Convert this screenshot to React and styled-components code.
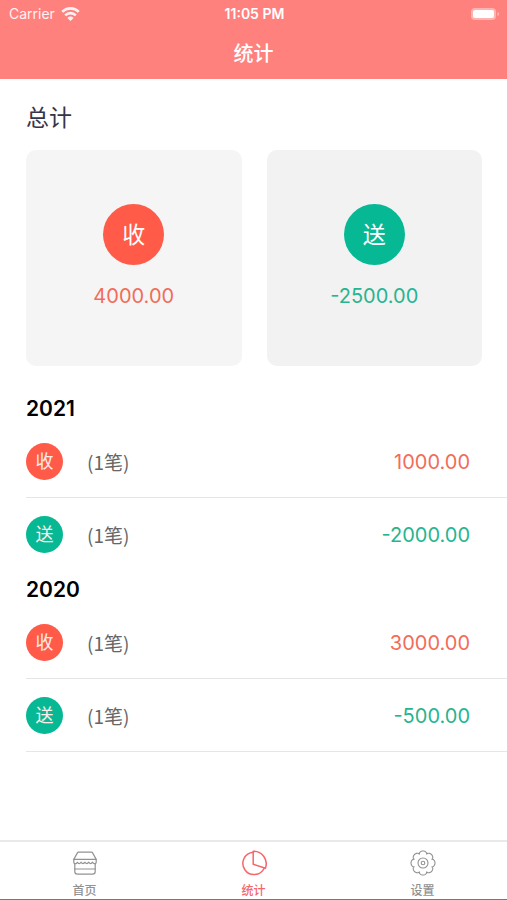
import React, { useState } from 'react';
import styled, { createGlobalStyle } from 'styled-components';

const GlobalStyle = createGlobalStyle`
  * {
    box-sizing: border-box;
  }

  body {
    margin: 0;
    background-color: #fff;
    font-family: Inter, 'Noto Sans CJK SC', sans-serif;
  }
`;

const Page = styled.div`
  display: flex;
  flex-direction: column;
  min-height: 100vh;
`;

const Header = styled.header`
  background-color: #ff817e;
  color: white;
  padding-bottom: 10px;

  h1 {
    margin: 0;
    font-size: 20px;
    line-height: 30px;
    font-weight: 500;
    text-align: center;
  }
`;

const StatusBar = styled.div`
  display: grid;
  grid-template-columns: 1fr auto 1fr;
  align-items: center;
  height: 27px;
  margin-bottom: 12px;
  padding: 0 7px 0 9px;
  font-size: 14px;
  line-height: 20px;
`;

const Carrier = styled.div`
  display: flex;
  align-items: center;
  gap: 6px;
  opacity: 0.9;
`;

const Clock = styled.time`
  font-weight: 600;
`;

const Battery = styled.svg`
  justify-self: end;
`;

const Content = styled.main`
  flex: 1;
  padding-left: 26px;
`;

const Heading = styled.h2`
  margin: 0;
  padding: 22px 0 14px;
  color: #35354a;
  font-size: 23px;
  line-height: 35px;
  font-weight: 400;
`;

const Cards = styled.div`
  display: grid;
  grid-template-columns: 1fr 1fr;
  gap: 25px;
  margin-bottom: 24px;
  padding-right: 25px;
`;

const Card = styled.div`
  display: flex;
  flex-direction: column;
  align-items: center;
  justify-content: center;
  gap: 16px;
  aspect-ratio: 1;
  border-radius: 10px;
  background-color: ${props => (props.$type === 'in' ? '#f5f5f5' : '#f2f2f2')};
`;

const Badge = styled.span`
  display: flex;
  align-items: center;
  justify-content: center;
  flex: none;
  width: ${props => (props.$large ? 61 : 37)}px;
  height: ${props => (props.$large ? 61 : 37)}px;
  border-radius: 50%;
  background-color: ${props => (props.$type === 'in' ? '#ff5b48' : '#06b994')};
  color: ${props => (props.$large ? '#fff' : '#ffece8')};
  font-size: ${props => (props.$large ? 23 : 18)}px;
  line-height: 30px;
`;

const Amount = styled.span`
  color: ${props => (props.$type === 'in' ? '#f26c5a' : '#26b590')};
  font-size: 20px;
  line-height: 30px;
`;

const Year = styled.h3`
  margin: 0;
  padding-top: 2px;
  color: #000;
  font-size: 21px;
  line-height: 33px;
  font-weight: 600;
`;

const Records = styled.ul`
  margin: 0;
  padding: 0;
  list-style: none;
`;

const Record = styled.li`
  display: flex;
  align-items: center;
  height: 73px;
  padding: 2px 37px 0 0;
  border-bottom: 1px solid #e6e6e6;

  section:not(:last-child) &:last-child {
    border-bottom-color: transparent;
  }
`;

const Count = styled.span`
  flex: 1;
  margin-left: 24px;
  color: #666;
  font-family: 'Noto Sans CJK SC', sans-serif;
  font-size: 19px;
  line-height: 30px;
`;

const TabBar = styled.nav`
  display: grid;
  grid-template-columns: repeat(3, 1fr);
  height: 60px;
  border-top: 2px solid #e9e9e9;
  border-bottom: 1px solid #777;
`;

const Tab = styled.button`
  display: flex;
  flex-direction: column;
  align-items: center;
  gap: 6px;
  padding: 8px 0 0;
  border: none;
  background: none;
  color: ${props => (props.$active ? '#f4686c' : '#929292')};
  font-family: inherit;
  font-size: 12px;
  font-weight: 500;
  line-height: 18px;
  cursor: pointer;

  svg {
    flex: none;
  }
`;

const iconProps = {
  width: 26,
  height: 26,
  viewBox: '0 0 26 26',
  fill: 'none',
  stroke: 'currentColor',
  strokeWidth: 1.2,
  strokeLinejoin: 'round',
  strokeLinecap: 'round',
  'aria-hidden': true
};

const HomeIcon = () => (
  <svg {...iconProps}>
    <path d="M6.6 2.2h12.8q.8 0 1.2.7l3.6 6.5H1.8l3.6-6.5q.4-.7 1.2-.7z" />
    <path d="M1.8 9.4v3q.2 1.2 1 1.4M24.2 9.4v3q-.2 1.2-1 1.4M2.8 13.4v8.2q0 2.6 2.6 2.6h15.2q2.6 0 2.6-2.6v-8.2" />
    <path d="M2.8 13.8q2 0 2.6-1.6q1.6 2.8 3.8 0q1.7 2.8 3.8 0q1.7 2.8 3.8 0q1.7 2.8 3.8 0q.8 1.6 2.6 1.6M2.8 19h20.4" />
  </svg>
);

const ChartIcon = () => (
  <svg {...iconProps} strokeWidth={1.5}>
    <path d="M12.2 2.2A11.2 11.2 0 1 0 23.2 18.2" />
    <path d="M12.2 1.2v13l12.2 4A12.6 12.6 0 0 0 12.2 1.2z" />
  </svg>
);

// eight rounded teeth around the centre
const gearPath = Array.from({ length: 96 }, (_, i) => {
  const angle = (i / 96) * Math.PI * 2;
  const radius = 9.6 + Math.sqrt(Math.abs(Math.cos(angle * 4))) * 2.4;
  const x = 13 + radius * Math.sin(angle);
  const y = 13 - radius * Math.cos(angle);
  return `${i === 0 ? 'M' : 'L'}${x.toFixed(2)} ${y.toFixed(2)}`;
}).join('') + 'Z';

const SettingsIcon = () => (
  <svg {...iconProps} strokeWidth={1.1}>
    <path d={gearPath} />
    <circle cx="13" cy="13" r="5" />
    <circle cx="13" cy="13" r="1.8" />
  </svg>
);

const WifiIcon = () => (
  <svg width="19" height="14" viewBox="0 0 19 14" fill="none" stroke="currentColor" strokeWidth="2.6" aria-hidden="true">
    <path d="M1.2 4.8a11.8 11.8 0 0 1 16.6 0" />
    <path d="M4.2 8.3a7.5 7.5 0 0 1 10.6 0" />
    <path d="M9.5 14L6.4 10.9a4.4 4.4 0 0 1 6.2 0z" fill="currentColor" stroke="none" />
  </svg>
);

const labels = { in: '收', out: '送' };

const totals = [
  { type: 'in', amount: 4000 },
  { type: 'out', amount: -2500 }
];

const years = [
  {
    year: 2021,
    records: [
      { type: 'in', count: 1, amount: 1000 },
      { type: 'out', count: 1, amount: -2000 }
    ]
  },
  {
    year: 2020,
    records: [
      { type: 'in', count: 1, amount: 3000 },
      { type: 'out', count: 1, amount: -500 }
    ]
  }
];

const tabs = [
  { id: 'home', label: '首页', Icon: HomeIcon },
  { id: 'stats', label: '统计', Icon: ChartIcon },
  { id: 'settings', label: '设置', Icon: SettingsIcon }
];

const App = () => {
  const [active, setActive] = useState('stats');

  return (
    <Page lang="zh-CN">
      <GlobalStyle />
      <Header>
        <StatusBar>
          <Carrier>
            Carrier
            <WifiIcon />
          </Carrier>
          <Clock>11:05 PM</Clock>
          <Battery width="30" height="14" viewBox="0 0 30 14" aria-hidden="true">
            <rect x="1" y="1" width="25" height="12" rx="4" fill="#fff" opacity="0.4" />
            <rect x="3" y="3" width="21" height="8" rx="2" fill="#fff" />
            <path d="M27.5 5v4q1.6-.6 1.6-2t-1.6-2z" fill="#fff" opacity="0.5" />
          </Battery>
        </StatusBar>
        <h1>统计</h1>
      </Header>
      <Content>
        <Heading>总计</Heading>
        <Cards>
          {totals.map(total => (
            <Card key={total.type} $type={total.type}>
              <Badge $large $type={total.type}>{labels[total.type]}</Badge>
              <Amount $type={total.type}>{total.amount.toFixed(2)}</Amount>
            </Card>
          ))}
        </Cards>
        {years.map(({ year, records }) => (
          <section key={year}>
            <Year>{year}</Year>
            <Records>
              {records.map(record => (
                <Record key={record.type}>
                  <Badge $type={record.type}>{labels[record.type]}</Badge>
                  <Count>({record.count}笔)</Count>
                  <Amount $type={record.type}>{record.amount.toFixed(2)}</Amount>
                </Record>
              ))}
            </Records>
          </section>
        ))}
      </Content>
      <TabBar>
        {tabs.map(({ id, label, Icon }) => (
          <Tab
            key={id}
            type="button"
            $active={active === id}
            aria-current={active === id ? 'page' : undefined}
            onClick={() => setActive(id)}
          >
            <Icon />
            {label}
          </Tab>
        ))}
      </TabBar>
    </Page>
  );
};

export default App;
